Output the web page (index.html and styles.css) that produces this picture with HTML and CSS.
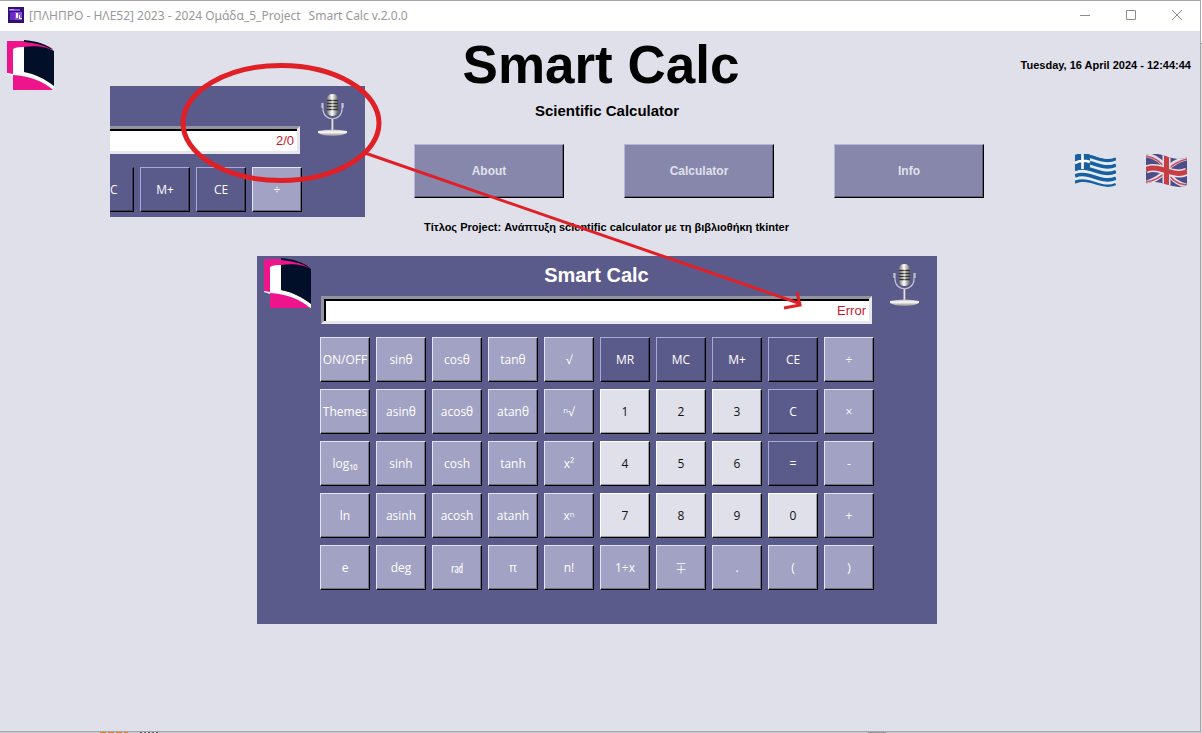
FILE: index.html
```html
<!DOCTYPE html>
<html lang="el">
<head>
<meta charset="utf-8">
<title>Smart Calc v.2.0.0</title>
<link rel="stylesheet" href="styles.css">
</head>
<body>
<svg class="defs" aria-hidden="true">
  <symbol id="logo" viewBox="0 0 48 51">
    <path fill="#ee148c" d="M0 1H17C28 1 39 4 46 9L17 8 6 10V35L0 33Z"/>
    <path fill="#020f28" d="M17 0C29 1 40 4 47 11C38 5 28 3 17 2Z"/>
    <path fill="#fff" d="M6 9C10 7 13 7 17 7V32C28 34 38 39 47 46V50L6 36 0 34V33L6 34Z"/>
    <path fill="#020f28" d="M17 7C29 5 40 7 47 11V46C38 39 28 34 17 32Z"/>
    <path fill="#ee148c" d="M6 35C22 36 36 41 46 50H6Z"/>
  </symbol>
  <symbol id="mic" viewBox="0 0 30 43">
    <defs>
      <linearGradient id="steel"><stop offset="0" stop-color="#777"/><stop offset=".45" stop-color="#fff"/><stop offset="1" stop-color="#666"/></linearGradient>
      <linearGradient id="base" x2="0" y2="1"><stop offset="0" stop-color="#bbb"/><stop offset=".4" stop-color="#fff"/><stop offset="1" stop-color="#888"/></linearGradient>
    </defs>
    <path d="M5 9V15C5 28 24 28 24 15V9" fill="none" stroke="#c4c4d2" stroke-width="1.2"/>
    <path d="M4 9V14M25 9V14" stroke="#e8e8ee"/>
    <rect x="9" y="0" width="11" height="22" rx="5" fill="url(#steel)"/>
    <path d="M9 6.500H20M9 9.500H20M9 12.500H20M9 15.500H20" stroke="#33332f" stroke-width="1.400"/>
    <path d="M14.500 4V19" stroke="#fff" stroke-opacity=".4" stroke-width="2"/>
    <path d="M14.500 25V38" stroke="#e2e2e4" stroke-width="2"/>
    <path d="M15.500 25V37" stroke="#77777f" stroke-width=".6"/>
    <path d="M0 37Q15 34 29 37V39Q24 42 14.500 42Q5 42 0 39Z" fill="url(#base)"/>
  </symbol>
  <symbol id="greece" viewBox="0 0 42 34">
    <clipPath id="gr-wave"><path d="M0 1C14 -5 27 10 41 3V31C27 38 14 23 0 30Z"/></clipPath>
    <g clip-path="url(#gr-wave)">
      <path fill="#e4edf6" d="M0 0H42V34H0Z"/>
      <g fill="none" stroke="#1a5f9f" stroke-width="3.600">
        <path d="M0 2.500C14 -3.500 27 11.500 41 4.500"/>
        <path d="M0 9C14 3 27 18 41 11"/>
        <path d="M0 15.500C14 9.500 27 24.500 41 17.500"/>
        <path d="M0 22C14 16 27 31 41 24"/>
        <path d="M0 28.500C14 22.500 27 37.500 41 30.500"/>
      </g>
      <path fill="#1a5f9f" d="M0 0H15V17Q7 13 0 17Z"/>
      <path fill="none" stroke="#fff" stroke-width="2.600" d="M7.500 0V15M0 9Q7 5 15 8"/>
    </g>
  </symbol>
  <symbol id="britain" viewBox="0 0 42 34">
    <clipPath id="uk-wave"><path d="M0 1C14 -5 27 10 41 3V31C27 38 14 23 0 30Z"/></clipPath>
    <g clip-path="url(#uk-wave)" fill="none">
      <path fill="#4c4c88" d="M0 0H42V34H0Z"/>
      <path stroke="#e4dde8" stroke-width="4.500" d="M0 1Q14 3 20.500 16T41 32M41 4Q28 7 20.500 16T0 29"/>
      <path stroke="#c4505c" stroke-width="1.500" d="M0 2Q14 4 20.500 17T41 31M41 5Q28 8 20.500 17T0 28"/>
      <path stroke="#eadfe6" stroke-width="8" d="M20.500 0V34M0 15.500C14 9.500 27 24.500 41 17.500"/>
      <path stroke="#c73d44" stroke-width="5" d="M20.500 0V34M0 15.500C14 9.500 27 24.500 41 17.500"/>
    </g>
  </symbol>
</svg>

<div class="screen">
  <div class="window">
    <div class="titlebar">
      <svg class="app-icon" viewBox="0 0 16 16" aria-hidden="true">
        <path fill="#32106f" d="M0 0H16V16H0Z"/>
        <path fill="#8f4de8" d="M1 2H12V4H1ZM2 5H14V13H2Z"/>
        <path fill="#6b2cc4" d="M2 5H7V13H2Z"/>
        <path fill="#fff" d="M8 6H10V11H8ZM11 8H12V11H14V12H11Z"/>
        <path fill="#c9a5ff" d="M2 2H6V3H2Z"/>
      </svg>
      <span>[ΠΛΗΠΡΟ - ΗΛΕ52] 2023 - 2024 Ομάδα_5_Project</span>
      <span>Smart Calc v.2.0.0</span>
      <div class="window-buttons">
        <button aria-label="Minimize"><svg viewBox="0 0 12 12"><path d="M1 6.500H11"/></svg></button>
        <button aria-label="Maximize"><svg viewBox="0 0 12 12"><path d="M1.500 1.500H10.500V10.500H1.500Z"/></svg></button>
        <button aria-label="Close"><svg viewBox="0 0 12 12"><path d="M1 1L11 11M11 1L1 11"/></svg></button>
      </div>
    </div>

    <main>
      <header class="header">
        <svg class="logo"><use href="#logo"/></svg>
        <div class="headings">
          <h1>Smart Calc</h1>
          <p class="subtitle">Scientific Calculator</p>
        </div>
        <time class="clock" datetime="2024-04-16T12:44:44">Tuesday, 16 April 2024 - 12:44:44</time>
      </header>

      <nav class="nav">
        <button class="nav-button">About</button>
        <button class="nav-button">Calculator</button>
        <button class="nav-button">Info</button>
        <div class="languages">
          <button aria-label="Ελληνικά"><svg><use href="#greece"/></svg></button>
          <button aria-label="English"><svg><use href="#britain"/></svg></button>
        </div>
      </nav>

      <p class="project">Τίτλος Project: Ανάπτυξη scientific calculator με τη βιβλιοθήκη tkinter</p>

      <section class="calculator">
        <div class="calculator-top">
          <svg class="logo"><use href="#logo"/></svg>
          <div class="calculator-head">
            <h2>Smart Calc</h2>
            <input class="display" type="text" value="Error" aria-label="Display">
          </div>
          <button class="mic" aria-label="Voice input"><svg><use href="#mic"/></svg></button>
        </div>
        <div class="keys">
          <button class="key">ON/OFF</button><button class="key">sinθ</button><button class="key">cosθ</button><button class="key">tanθ</button><button class="key">√</button><button class="key dark">MR</button><button class="key dark">MC</button><button class="key dark">M+</button><button class="key dark">CE</button><button class="key">÷</button>
          <button class="key">Themes</button><button class="key">asinθ</button><button class="key">acosθ</button><button class="key">atanθ</button><button class="key">ⁿ√</button><button class="key digit">1</button><button class="key digit">2</button><button class="key digit">3</button><button class="key dark">C</button><button class="key">×</button>
          <button class="key">log₁₀</button><button class="key">sinh</button><button class="key">cosh</button><button class="key">tanh</button><button class="key">x²</button><button class="key digit">4</button><button class="key digit">5</button><button class="key digit">6</button><button class="key dark">=</button><button class="key">-</button>
          <button class="key">ln</button><button class="key">asinh</button><button class="key">acosh</button><button class="key">atanh</button><button class="key">xⁿ</button><button class="key digit">7</button><button class="key digit">8</button><button class="key digit">9</button><button class="key digit">0</button><button class="key">+</button>
          <button class="key">e</button><button class="key">deg</button><button class="key">㎭</button><button class="key">π</button><button class="key">n!</button><button class="key">1÷x</button><button class="key">∓</button><button class="key">.</button><button class="key">(</button><button class="key">)</button>
        </div>
      </section>
    </main>
  </div>
  <div class="backdrop-edge"></div>
  <div class="backdrop-bottom"><i class="tab orange"></i><i class="tab navy"></i><i class="tab gray"></i></div>

  <section class="inset">
    <div class="inset-body">
      <input class="display" type="text" value="2/0" aria-label="Expression">
      <div class="inset-keys">
        <button class="key dark partial">C</button><button class="key dark">M+</button><button class="key dark">CE</button><button class="key">÷</button>
      </div>
    </div>
    <button class="mic" aria-label="Voice input"><svg><use href="#mic"/></svg></button>
  </section>
  <svg class="annotation" viewBox="0 0 1202 733" aria-hidden="true">
    <g fill="none" stroke="#e01f27">
      <ellipse cx="281" cy="123" rx="98" ry="57.500" stroke-width="5"/>
      <path stroke-width="3" d="M365 153L801 304M784 308L800 305L797 292"/>
    </g>
  </svg>
</div>
</body>
</html>
```

FILE: styles.css
```css
* {
  box-sizing: border-box;
}

body {
  margin: 0;
  font-family: "Liberation Sans", Arial, sans-serif;
  color: #000;
}

h1, h2, p {
  margin: 0;
}

button {
  margin: 0;
  padding: 0;
  border: 0;
  background: none;
  font: inherit;
  color: inherit;
}

svg {
  display: block;
}

.defs {
  position: absolute;
  width: 0;
  height: 0;
}

.screen {
  position: relative;
  display: grid;
  grid-template-columns: 1fr 1px;
  grid-template-rows: 1fr 1px;
  min-height: 100vh;
  overflow: hidden;
}

.window {
  display: flex;
  flex-direction: column;
  background: #e0e0eb;
  border: 1px solid #a6a6aa;
  border-left: 0;
}

.titlebar {
  display: flex;
  align-items: center;
  gap: 8px;
  height: 30px;
  padding: 0 0 2px 8px;
  background: #fff;
  color: #999;
  font: 12px "Noto Sans", "Open Sans", sans-serif;
}

.app-icon {
  width: 16px;
  height: 16px;
  margin-right: -3px;
}

.window-buttons {
  display: flex;
  margin-left: auto;
}

.window-buttons button {
  display: grid;
  place-items: center;
  width: 46px;
  height: 28px;
}

.window-buttons svg {
  width: 12px;
  height: 12px;
  fill: none;
  stroke: #8c8c8c;
}

main {
  flex: 1;
}

.header {
  display: grid;
  grid-template-columns: 1fr auto 1fr;
  align-items: start;
  padding: 4px 9px 0 7px;
}

.logo {
  width: 48px;
  height: 51px;
}

.header .logo {
  margin-top: 5px;
}

.headings {
  padding-left: 4px;
  text-align: center;
}

h1 {
  font-size: 53px;
  line-height: 60px;
}

.subtitle {
  margin-top: 7px;
  padding-left: 12px;
  font-size: 15px;
  font-weight: bold;
  line-height: 18px;
}

.clock {
  margin-top: 23px;
  font-size: 11px;
  font-weight: bold;
  line-height: 14px;
  text-align: right;
}

.nav {
  display: flex;
  justify-content: flex-end;
  align-items: center;
  gap: 60px;
  margin-top: 24px;
  padding-right: 12px;
}

.nav-button {
  width: 150px;
  height: 54px;
  border: 1px solid;
  border-color: #b6b6dc #000 #000 #b6b6dc;
  box-shadow: inset -1px -1px #5c5c78;
  background: #8787ab;
  color: #e0e0eb;
  font-size: 12px;
  font-weight: bold;
}

.languages {
  display: flex;
  gap: 29px;
  margin-left: 31px;
}

.languages svg {
  width: 42px;
  height: 34px;
}

.project {
  margin-top: 22px;
  padding-left: 13px;
  font-size: 11px;
  font-weight: bold;
  line-height: 14px;
  text-align: center;
}

.calculator {
  width: 680px;
  max-width: 100%;
  margin: 22px auto 0;
  padding-bottom: 34px;
  position: relative;
  right: 3px;
  background: #5b5b8b;
}

.calculator-top {
  display: grid;
  grid-template-columns: 63px 1fr 63px;
  align-items: start;
  height: 68px;
}

.calculator .logo {
  margin: 2px 0 0 7px;
}

.calculator-head {
  padding: 7px 2px 0 1px;
}

h2 {
  height: 33px;
  color: #fff;
  font-size: 20px;
  line-height: 24px;
  text-align: center;
}

.display {
  display: block;
  width: 100%;
  height: 28px;
  padding: 1px 3px 0;
  border: 3px solid;
  border-color: #9494a0 #e6e6ec #e6e6ec #9494a0;
  border-radius: 0;
  box-shadow: inset 2px 2px #000;
  background: #fff;
  color: #c4182c;
  font: 13px "Liberation Sans", Arial, sans-serif;
  text-align: right;
}

.mic {
  justify-self: center;
  margin: 8px 2px 0 0;
}

.mic svg {
  width: 30px;
  height: 43px;
}

.keys {
  display: grid;
  grid-template-columns: repeat(10, 1fr);
  gap: 7px 6px;
  margin: 13px 63px 0;
}

.key {
  min-width: 0;
  height: 45px;
  border: 1px solid;
  border-color: #e4e4f4 #000 #000 #e4e4f4;
  box-shadow: inset -1px -1px #6e6e86;
  background: #a2a2c4;
  color: #fff;
  font: 12px "Open Sans", "Noto Sans", "Noto Sans CJK JP", sans-serif;
  white-space: nowrap;
}

.key.dark {
  border-color: #a9a9d6 #000 #000 #a9a9d6;
  box-shadow: inset -1px -1px #3c3c5c;
  background: #5b5b8b;
}

.key.digit {
  border-color: #fff #000 #000 #fff;
  box-shadow: inset -1px -1px #9a9aa4;
  background: #e0e0eb;
  color: #111;
}

.inset {
  position: absolute;
  top: 86px;
  left: 110px;
  display: grid;
  grid-template-columns: 192px 63px;
  align-items: start;
  background: #5b5b8b;
}

.inset-body {
  padding: 40px 0 5px;
}

.inset .display {
  width: 190px;
  border-left: 0;
  box-shadow: inset 0 2px #000;
}

.inset-keys {
  display: grid;
  grid-template-columns: 24px repeat(3, 50px);
  gap: 6px;
  margin-top: 13px;
}

.key.partial {
  border-top-color: #5b5b8b;
  border-left: 0;
  text-align: left;
}

.annotation {
  position: absolute;
  top: 0;
  left: 0;
  width: 1202px;
  height: 733px;
  pointer-events: none;
}

.backdrop-edge {
  background: linear-gradient(#fff 43px, #8c8c8c 43px 44px, #dcdcdc 44px);
}

.backdrop-bottom {
  grid-column: 1 / -1;
  display: flex;
  padding-left: 100px;
  background: #c9c9cf;
}

.tab {
  width: 28px;
}

.tab.orange {
  background: repeating-linear-gradient(90deg, #d98a2b 0 6px, #c9c9cf 6px 8px);
}

.tab.navy {
  margin-left: 12px;
  width: 20px;
  background: repeating-linear-gradient(90deg, #66667a 0 2px, #c9c9cf 2px 4px);
}

.tab.gray {
  margin-left: auto;
  margin-right: 316px;
  width: 18px;
  background: #999;
}
```
